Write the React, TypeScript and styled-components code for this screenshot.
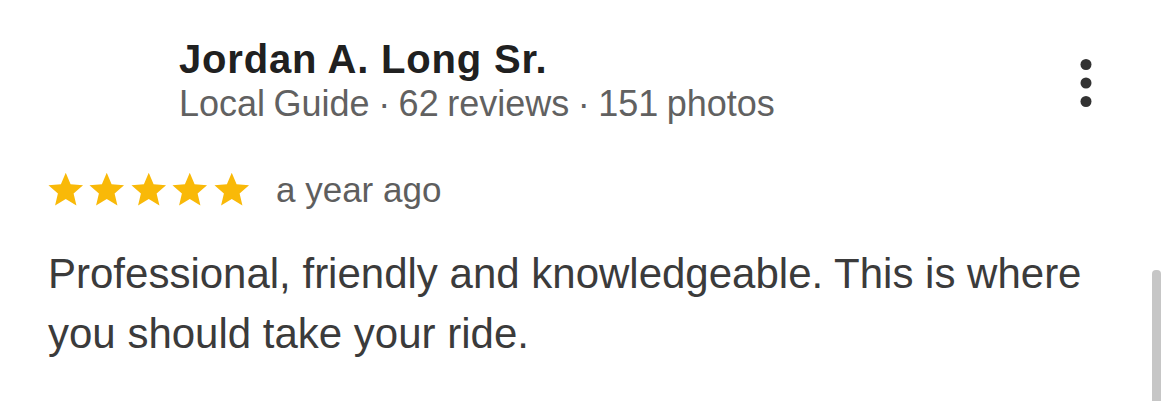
import React from "react";
import styled, { createGlobalStyle } from "styled-components";

const Global = createGlobalStyle`
  html, body { margin: 0; padding: 0; background: #ffffff; }
  body { font-family: "Liberation Sans", Arial, Helvetica, sans-serif; }
`;

const Page = styled.div`
  position: relative;
  width: 1170px;
  height: 401px;
  overflow: hidden;
  background: #fff;
  box-sizing: border-box;
  padding: 36px 40px 0 46px;
`;

const Header = styled.div`
  display: flex;
  align-items: flex-start;
  padding-left: 133px;
`;

const Author = styled.div`
  flex: 1;
  display: flex;
  flex-direction: column;
`;

const Name = styled.div`
  font-size: 40px;
  line-height: 46px;
  font-weight: 700;
  letter-spacing: 0.8px;
  color: #202020;
`;

const Meta = styled.div`
  font-size: 36px;
  line-height: 44px;
  word-spacing: -1.5px;
  color: #616161;
`;

const MoreButton = styled.button`
  border: 0;
  background: none;
  padding: 0;
  margin: 22px 38px 0 0;
  display: flex;
  align-items: center;
  justify-content: center;
  width: 12px;
  height: 50px;
  color: #333;
`;

const RatingRow = styled.div`
  display: flex;
  align-items: center;
  margin-top: 42px;
  margin-left: -1.5px;
`;

const Stars = styled.div`
  display: flex;
  margin-right: 24px;
`;

const StarSvg = styled.svg`
  width: 41.5px;
  height: 42px;
  fill: #f9b908;
  display: block;
`;

const When = styled.span`
  font-size: 35px;
  line-height: 44px;
  color: #5e5e5e;
`;

const Body = styled.p`
  margin: 32px 0 0 2px;
  font-size: 42px;
  line-height: 60px;
  color: #3b3b3b;
`;

const ScrollIndicator = styled.div`
  position: absolute;
  left: 1152px;
  top: 270px;
  width: 9px;
  height: 160px;
  border-radius: 4px;
  background: #c6c6c6;
`;

const Star = () => (
  <StarSvg viewBox="0 0 24 24" aria-hidden="true">
    <path d="M12 17.27L18.18 21l-1.64-7.03L22 9.24l-7.19-.61L12 2 9.19 8.63 2 9.24l5.46 4.73L5.82 21z" />
  </StarSvg>
);

export default function App() {
  return (
    <>
      <Global />
      <Page>
        <Header>
          <Author>
            <Name>Jordan A. Long Sr.</Name>
            <Meta>Local Guide · 62 reviews · 151 photos</Meta>
          </Author>
          <MoreButton aria-label="More options">
            <svg width="12" height="50" viewBox="0 0 12 50" fill="currentColor">
              <circle cx="6" cy="6.5" r="5.5" />
              <circle cx="6" cy="25" r="5.5" />
              <circle cx="6" cy="43.5" r="5.5" />
            </svg>
          </MoreButton>
        </Header>
        <RatingRow>
          <Stars>
            {[0, 1, 2, 3, 4].map((i) => (
              <Star key={i} />
            ))}
          </Stars>
          <When>a year ago</When>
        </RatingRow>
        <Body>
          Professional, friendly and knowledgeable. This is where you should take your ride.
        </Body>
        <ScrollIndicator />
      </Page>
    </>
  );
}
